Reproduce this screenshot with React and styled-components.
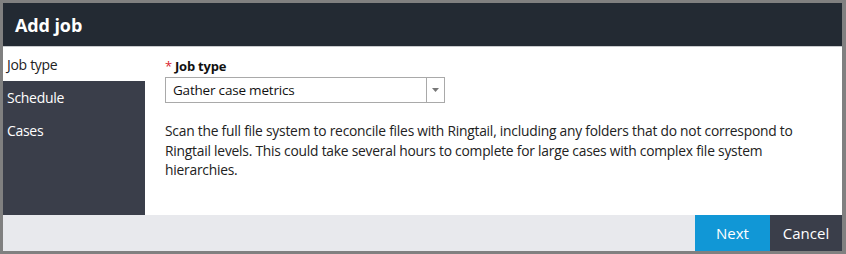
import React from 'react'
import styled, { createGlobalStyle } from 'styled-components'

const GlobalStyle = createGlobalStyle`
    html, body {
        margin: 0;
        padding: 0;
        background: #808080;
    }
    body {
        font-family: "Open Sans", "Noto Sans", sans-serif;
    }
`

const Frame = styled.div`
    width: 839px;
    height: 248px;
    margin: 3px 4px 3px 3px;
    background: #ffffff;
    display: flex;
    flex-direction: column;
    overflow: hidden;
`

const Header = styled.div`
    height: 43px;
    background: #232a33;
    border-bottom: 1px solid #c8cacd;
    display: flex;
    align-items: center;
    padding-left: 12px;
    color: #ffffff;
    font-size: 18px;
    font-weight: 700;
    letter-spacing: -0.1px;
`

const Body = styled.div`
    flex: 1;
    display: flex;
`

const Sidebar = styled.div`
    width: 142px;
    background: #3a3e4a;
    display: flex;
    flex-direction: column;
`

const NavItem = styled.div`
    height: ${p => (p.active ? 34 : 33)}px;
    display: flex;
    align-items: center;
    padding-left: 4px;
    font-size: 14px;
    letter-spacing: -0.3px;
    color: ${p => (p.active ? '#222222' : '#ffffff')};
    background: ${p => (p.active ? '#ffffff' : 'transparent')};
`

const Content = styled.div`
    flex: 1;
    padding: 10px 0 0 20px;
`

const Label = styled.div`
    font-size: 13px;
    font-weight: 700;
    color: #111111;
    letter-spacing: -0.2px;
    display: flex;
    gap: 3px;
    line-height: 18px;
`

const Star = styled.span`
    color: #d9232e;
    font-weight: 400;
`

const Select = styled.div`
    margin-top: 2px;
    width: 278px;
    height: 24px;
    border: 1px solid #a9a9a9;
    display: flex;
    box-sizing: content-box;
`

const SelectValue = styled.div`
    flex: 1;
    display: flex;
    align-items: center;
    padding-left: 7px;
    font-size: 13.5px;
    letter-spacing: -0.2px;
    color: #111111;
`

const SelectArrow = styled.div`
    width: 17px;
    border-left: 1px solid #a9a9a9;
    display: flex;
    align-items: center;
    justify-content: center;
`

const Description = styled.p`
    margin: 18px 0 0;
    max-width: 650px;
    font-size: 13.8px;
    line-height: 19.5px;
    letter-spacing: -0.22px;
    color: #222222;
`

const Footer = styled.div`
    height: 36px;
    background: #e8e9ed;
    display: flex;
    justify-content: flex-end;
`

const Button = styled.div`
    width: ${p => p.w}px;
    display: flex;
    align-items: center;
    justify-content: center;
    color: #ffffff;
    font-size: 15px;
    background: ${p => (p.primary ? '#1197d6' : '#3a3e4a')};
`

export default function App() {
    return (
        <>
            <GlobalStyle />
            <Frame>
                <Header>Add job</Header>
                <Body>
                    <Sidebar>
                        <NavItem active>Job type</NavItem>
                        <NavItem>Schedule</NavItem>
                        <NavItem>Cases</NavItem>
                    </Sidebar>
                    <Content>
                        <Label><Star>*</Star>Job type</Label>
                        <Select>
                            <SelectValue>Gather case metrics</SelectValue>
                            <SelectArrow>
                                <svg width="7" height="4" viewBox="0 0 7 4">
                                    <path d="M0 0 H7 L3.5 4 Z" fill="#777777" />
                                </svg>
                            </SelectArrow>
                        </Select>
                        <Description>
                            Scan the full file system to reconcile files with Ringtail, including any folders that do not correspond to Ringtail levels. This could take several hours to complete for large cases with complex file system hierarchies.
                        </Description>
                    </Content>
                </Body>
                <Footer>
                    <Button primary w={75}>Next</Button>
                    <Button w={72}>Cancel</Button>
                </Footer>
            </Frame>
        </>
    )
}
